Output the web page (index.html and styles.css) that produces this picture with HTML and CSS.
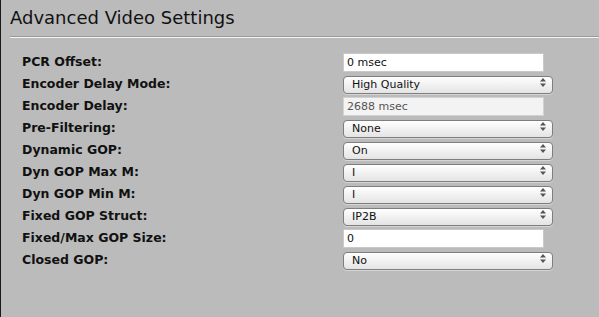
FILE: index.html
```html
<!DOCTYPE html>
<html lang="en">
<head>
    <meta charset="UTF-8">
    <title>Advanced Video Settings</title>
    <link rel="stylesheet" href="styles.css">
</head>
<body>
    <div class="panel">
        <h2 class="panel-title">Advanced Video Settings</h2>
        <hr class="rule">

        <div class="settings">
            <label class="label">PCR Offset:</label>
            <div class="field"><input class="text" type="text" value="0 msec"></div>

            <label class="label">Encoder Delay Mode:</label>
            <div class="field">
                <select class="choice"><option>High Quality</option></select>
                <svg class="arrows" width="6" height="9" viewBox="0 0 6 9"><path d="M3 0L6 3.5H0Z M3 9L6 5.5H0Z" fill="#555"/></svg>
            </div>

            <label class="label">Encoder Delay:</label>
            <div class="field"><input class="text" type="text" value="2688 msec" disabled></div>

            <label class="label">Pre-Filtering:</label>
            <div class="field">
                <select class="choice"><option>None</option></select>
                <svg class="arrows" width="6" height="9" viewBox="0 0 6 9"><path d="M3 0L6 3.5H0Z M3 9L6 5.5H0Z" fill="#555"/></svg>
            </div>

            <label class="label">Dynamic GOP:</label>
            <div class="field">
                <select class="choice"><option>On</option></select>
                <svg class="arrows" width="6" height="9" viewBox="0 0 6 9"><path d="M3 0L6 3.5H0Z M3 9L6 5.5H0Z" fill="#555"/></svg>
            </div>

            <label class="label">Dyn GOP Max M:</label>
            <div class="field">
                <select class="choice"><option>I</option></select>
                <svg class="arrows" width="6" height="9" viewBox="0 0 6 9"><path d="M3 0L6 3.5H0Z M3 9L6 5.5H0Z" fill="#555"/></svg>
            </div>

            <label class="label">Dyn GOP Min M:</label>
            <div class="field">
                <select class="choice"><option>I</option></select>
                <svg class="arrows" width="6" height="9" viewBox="0 0 6 9"><path d="M3 0L6 3.5H0Z M3 9L6 5.5H0Z" fill="#555"/></svg>
            </div>

            <label class="label">Fixed GOP Struct:</label>
            <div class="field">
                <select class="choice"><option>IP2B</option></select>
                <svg class="arrows" width="6" height="9" viewBox="0 0 6 9"><path d="M3 0L6 3.5H0Z M3 9L6 5.5H0Z" fill="#555"/></svg>
            </div>

            <label class="label">Fixed/Max GOP Size:</label>
            <div class="field"><input class="text" type="text" value="0"></div>

            <label class="label">Closed GOP:</label>
            <div class="field">
                <select class="choice"><option>No</option></select>
                <svg class="arrows" width="6" height="9" viewBox="0 0 6 9"><path d="M3 0L6 3.5H0Z M3 9L6 5.5H0Z" fill="#555"/></svg>
            </div>
        </div>
    </div>
</body>
</html>
```

FILE: styles.css
```css
html, body {
    margin: 0;
    padding: 0;
    background: #bbbbbb;
}
body {
    font-family: "DejaVu Sans", Verdana, sans-serif;
    color: #111;
}
.panel {
    height: 317px;
    box-sizing: border-box;
    border-left: 1px solid #1a1a1a;
    padding-left: 9px;
}
.panel-title {
    margin: 0;
    padding-top: 6px;
    font-size: 18px;
    line-height: 24px;
    font-weight: normal;
    color: #111;
}
.rule {
    margin: 6px 0 0 0;
    border: 0;
    border-top: 1px solid #9a9a9a;
    border-bottom: 1px solid #f4f4f4;
}
.settings {
    display: grid;
    grid-template-columns: 321px 210px;
    grid-auto-rows: 22px;
    padding: 13px 0 0 12px;
}
.label {
    font-size: 12.5px;
    font-weight: bold;
    height: 19px;
    line-height: 21px;
    color: #111;
}
.field {
    position: relative;
    height: 19px;
}
.text {
    box-sizing: border-box;
    width: 201px;
    height: 19px;
    margin: 0;
    padding: 0 3px;
    border: 1px solid #c9c9c9;
    background: #fff;
    font-family: "DejaVu Sans", Verdana, sans-serif;
    font-size: 11px;
    color: #111;
    outline: none;
}
.text:disabled {
    background: #f3f3f3;
    border-color: #d2d2d2;
    color: #555;
}
.choice {
    appearance: none;
    -webkit-appearance: none;
    box-sizing: border-box;
    width: 210px;
    height: 18px;
    margin: 0;
    padding: 0 0 0 8px;
    border: 1px solid #7e7e7e;
    border-radius: 4px;
    background: linear-gradient(#ffffff, #f1f1f1 50%, #e4e4e4);
    font-family: "DejaVu Sans", Verdana, sans-serif;
    font-size: 11px;
    color: #111;
    box-shadow: 0 1px 0 rgba(255,255,255,0.4);
}
.arrows {
    position: absolute;
    left: 197px;
    top: 5px;
}
```
